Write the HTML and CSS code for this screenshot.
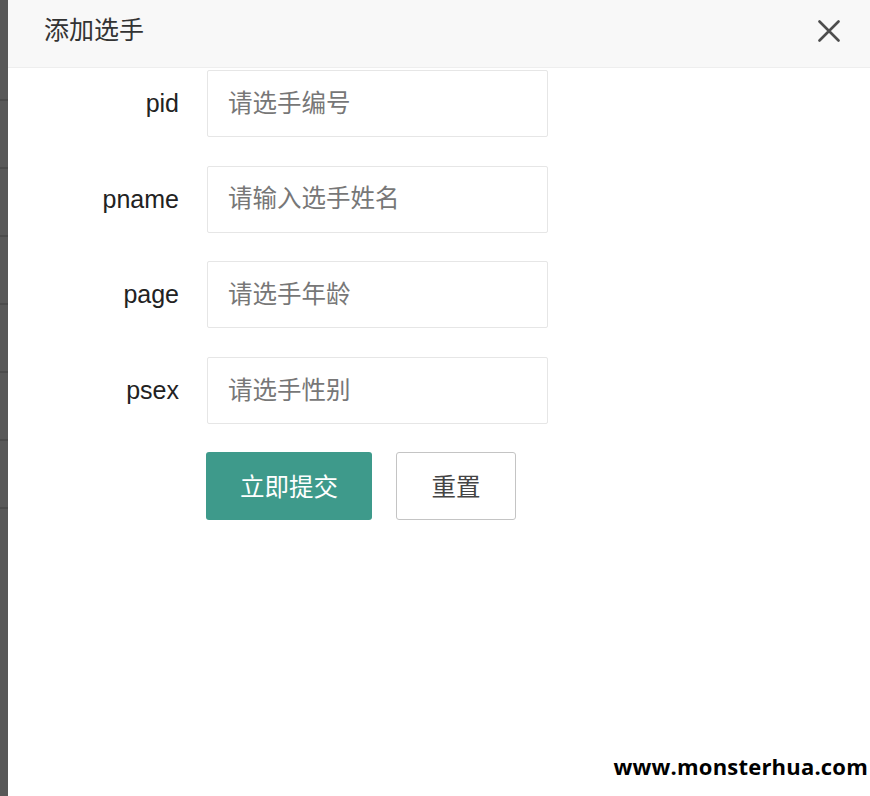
FILE: index.html
```html
<!DOCTYPE html>
<html lang="zh-CN">
<head>
<meta charset="utf-8">
<title>添加选手</title>
<link rel="stylesheet" href="styles.css">
</head>
<body>
<div class="strip"></div>
<div class="panel">
  <div class="header">
    <span class="title">添加选手</span>
    <span class="close" aria-label="close">
      <svg width="22" height="22" viewBox="0 0 22 22"><path d="M1.5 1.5 L20.5 20.5 M20.5 1.5 L1.5 20.5" stroke="#4d4d4d" stroke-width="2.6" stroke-linecap="round" fill="none"/></svg>
    </span>
  </div>
  <form class="form">
    <div class="item"><label class="label">pid</label><input class="input" placeholder="请选手编号"></div>
    <div class="item"><label class="label">pname</label><input class="input" placeholder="请输入选手姓名"></div>
    <div class="item"><label class="label">page</label><input class="input" placeholder="请选手年龄"></div>
    <div class="item"><label class="label">psex</label><input class="input" placeholder="请选手性别"></div>
    <div class="actions">
      <button type="button" class="btn btn-primary">立即提交</button>
      <button type="button" class="btn btn-reset">重置</button>
    </div>
  </form>
  <div class="watermark">www.monsterhua.com</div>
</div>
</body>
</html>
```
FILE: styles.css
```css
html, body {
  margin: 0;
  padding: 0;
}
body {
  width: 870px;
  height: 796px;
  overflow: hidden;
  display: flex;
  font-family: "Liberation Sans", "Noto Sans CJK SC", sans-serif;
  color: #333;
}
.strip {
  width: 8px;
  flex: none;
  background-color: #585858;
  background-image: repeating-linear-gradient(to bottom, #4b4b4b 0, #4b4b4b 2px, transparent 2px, transparent 68px);
  background-position: 0 99px;
  background-repeat: no-repeat;
  background-size: 8px 412px;
}
.panel {
  flex: 1;
  background: #fff;
  display: flex;
  flex-direction: column;
  position: relative;
}
.header {
  border-bottom: 1px solid #eee;
  background: #f8f8f8;
  display: flex;
  align-items: center;
  justify-content: space-between;
  padding: 0 30px 12px 36px;
  box-sizing: border-box;
  height: 68px;
}
.title {
  font-size: 25px;
  color: #333;
}
.close {
  display: flex;
  margin-top: 6px;
}
.form {
  margin: 0;
  padding-top: 2px;
  display: flex;
  flex-direction: column;
}
.item {
  display: flex;
  align-items: center;
  margin-bottom: 28.7px;
}
.label {
  width: 171px;
  text-align: right;
  font-size: 25px;
  color: #222;
  margin-right: 28px;
}
.input {
  width: 341px;
  height: 67px;
  box-sizing: border-box;
  border: 1px solid #e6e6e6;
  border-radius: 2px;
  padding: 0 0 0 20px;
  font-family: "Liberation Sans", "Noto Sans CJK SC", sans-serif;
  font-size: 24.5px;
  color: #333;
  outline: none;
  background: #fff;
}
.input::placeholder {
  color: #777;
}
.actions {
  display: flex;
  gap: 24px;
  margin-left: 198px;
  margin-top: -1px;
}
.btn {
  height: 68px;
  border-radius: 3px;
  font-family: "Liberation Sans", "Noto Sans CJK SC", sans-serif;
  font-size: 24.5px;
  padding: 0;
  cursor: pointer;
}
.btn-primary {
  width: 166px;
  background: #3e9a8b;
  border: none;
  color: #fff;
}
.btn-reset {
  width: 120px;
  background: #fff;
  border: 1.5px solid #c4c4c4;
  color: #444;
}
.watermark {
  position: absolute;
  right: 2px;
  bottom: 15px;
  font-family: "Open Sans", "Noto Sans", sans-serif;
  font-weight: 700;
  font-size: 22px;
  color: #000;
  letter-spacing: 0.2px;
}
```
